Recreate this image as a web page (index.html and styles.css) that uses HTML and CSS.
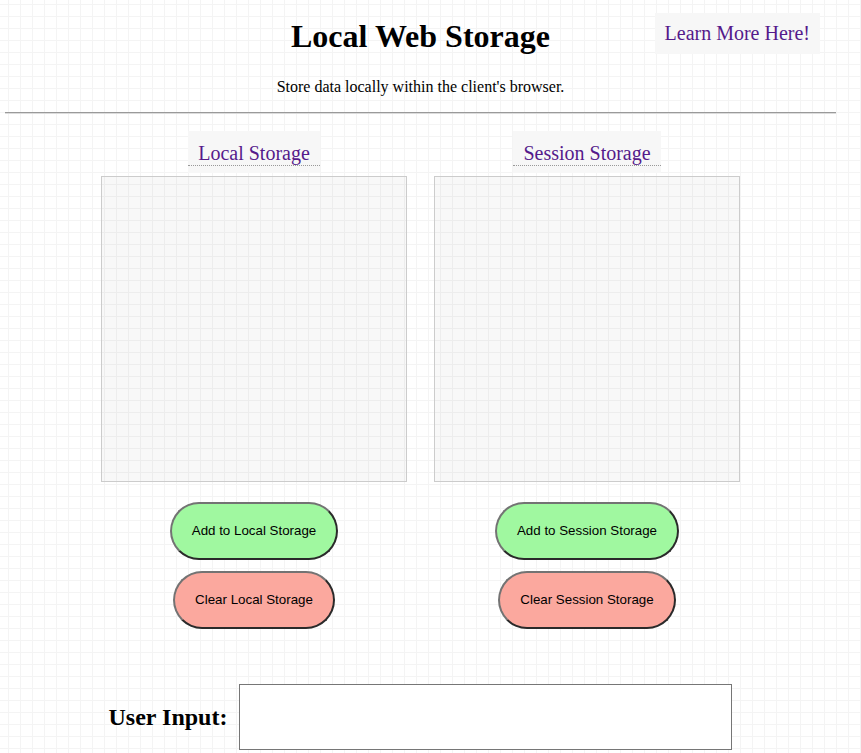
FILE: index.html
```html
<!DOCTYPE html>
<html lang="en">
<head>
<meta charset="utf-8">
<title>Local Web Storage</title>
<link rel="stylesheet" href="styles.css">
</head>
<body>
<div class="page">
  <header class="header">
    <h1 class="heading">Local Web Storage</h1>
    <p class="subtitle">Store data locally within the client's browser.</p>
    <a class="learn-more" href="#">Learn More Here!</a>
  </header>
  <hr class="divider">
  <section class="columns">
    <div class="col">
      <div class="title-wrap"><span class="title">Local Storage</span></div>
      <div class="box"></div>
      <button class="btn btn-add" type="button">Add to Local Storage</button>
      <button class="btn btn-clear" type="button">Clear Local Storage</button>
    </div>
    <div class="col">
      <div class="title-wrap"><span class="title">Session Storage</span></div>
      <div class="box"></div>
      <button class="btn btn-add" type="button">Add to Session Storage</button>
      <button class="btn btn-clear" type="button">Clear Session Storage</button>
    </div>
  </section>
  <section class="input-row">
    <label class="input-label" for="user-input">User Input:</label>
    <input class="user-input" id="user-input" type="text">
  </section>
</div>
</body>
</html>
```

FILE: styles.css
```css
html {
  background-color: #ffffff;
  background-image:
    linear-gradient(to right, #f4f4f4 1px, transparent 1px),
    linear-gradient(to bottom, #f4f4f4 1px, transparent 1px);
  background-size: 12px 12px;
  background-position: 8px 4px;
}

body {
  margin: 0;
  font-family: "Liberation Serif", "Times New Roman", serif;
  color: #000;
}

.page {
  position: relative;
  width: 831px;
  margin-left: 5px;
  padding-top: 18px;
}

.header {
  text-align: center;
}

.heading {
  margin: 0;
  font-size: 32px;
  line-height: 36px;
  font-weight: bold;
}

.subtitle {
  margin: 24px 0 0;
  font-size: 16px;
  line-height: 18px;
}

.learn-more {
  position: absolute;
  top: 13px;
  right: 16px;
  padding: 9px 10px;
  background: #f7f7f7;
  color: #551a8b;
  font-size: 20px;
  line-height: 23px;
  text-decoration: none;
}

.divider {
  margin: 16px 0 0;
  height: 0;
  border: 0;
  border-top: 1px solid #9a9a9a;
  border-bottom: 1px solid #dcdcdc;
}

.columns {
  display: flex;
  justify-content: center;
  gap: 27px;
  margin-top: 17px;
}

.col {
  width: 306px;
  display: flex;
  flex-direction: column;
  align-items: center;
}

.title-wrap {
  background: #f7f7f7;
  padding-bottom: 7px;
  margin-bottom: 3px;
}

.title {
  display: block;
  padding: 11px 10px 1px;
  font-size: 20px;
  line-height: 22px;
  color: #551a8b;
  border-bottom: 1px dotted #999;
}

.box {
  box-sizing: border-box;
  width: 306px;
  height: 306px;
  border: 1px solid #cccccc;
  background: rgba(0, 0, 0, 0.028);
}

.btn {
  margin-top: 20px;
  padding: 19px 20px;
  font-family: "Liberation Sans", Arial, sans-serif;
  font-size: 13.33px;
  line-height: 16px;
  color: #000;
  border: 2px solid;
  border-color: #737373 #2a2a2a #2a2a2a #737373;
  border-radius: 30px;
  cursor: pointer;
}

.btn-add {
  background: #a0f8a0;
}

.btn-clear {
  margin-top: 11px;
  background: #fba89e;
}

.input-row {
  display: flex;
  justify-content: center;
  align-items: center;
  gap: 12px;
  margin-top: 55px;
}

.input-label {
  font-size: 24px;
  font-weight: bold;
  line-height: 28px;
}

.user-input {
  box-sizing: border-box;
  width: 493px;
  height: 66px;
  margin: 0;
  border: 1px solid #767676;
  background: #fff;
  font-size: 16px;
}
```
